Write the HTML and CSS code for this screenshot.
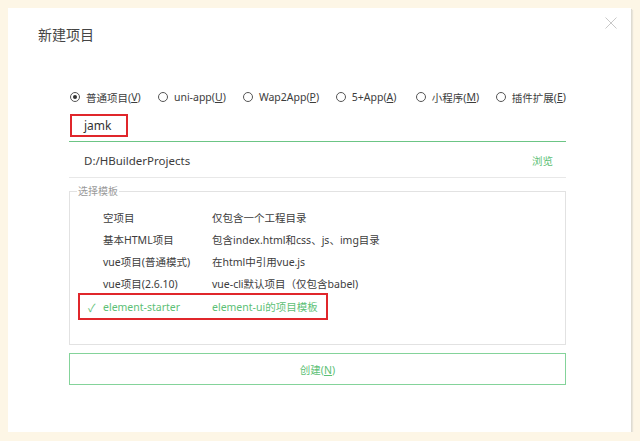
FILE: index.html
```html
<!DOCTYPE html>
<html lang="zh-CN">
<head>
    <meta charset="UTF-8">
    <title>新建项目</title>
    <link rel="stylesheet" href="styles.css">
</head>
<body>
    <div class="dialog">
        <div class="dialog-head">
            <h1 class="dialog-title">新建项目</h1>
            <svg class="close" width="12" height="12" viewBox="0 0 12 12">
                <path d="M0.5 0.5L11.5 11.5M11.5 0.5L0.5 11.5" stroke="#c8c8c8" stroke-width="1" fill="none"/>
            </svg>
        </div>

        <div class="dialog-body">
            <div class="types">
                <label class="type"><span class="radio checked"></span>普通项目(<u>V</u>)</label>
                <label class="type"><span class="radio"></span>uni-app(<u>U</u>)</label>
                <label class="type"><span class="radio"></span>Wap2App(<u>P</u>)</label>
                <label class="type"><span class="radio"></span>5+App(<u>A</u>)</label>
                <label class="type"><span class="radio"></span>小程序(<u>M</u>)</label>
                <label class="type"><span class="radio"></span>插件扩展(<u>E</u>)</label>
            </div>

            <div class="name-field">
                <span class="name-value">jamk</span>
            </div>

            <div class="path-field">
                <span class="path-value">D:/HBuilderProjects</span>
                <span class="browse">浏览</span>
            </div>

            <fieldset class="templates">
                <legend>选择模板</legend>
                <div class="tpl-row">
                    <span class="check"></span>
                    <span class="tpl-name">空项目</span>
                    <span class="tpl-desc">仅包含一个工程目录</span>
                </div>
                <div class="tpl-row">
                    <span class="check"></span>
                    <span class="tpl-name">基本HTML项目</span>
                    <span class="tpl-desc">包含index.html和css、js、img目录</span>
                </div>
                <div class="tpl-row">
                    <span class="check"></span>
                    <span class="tpl-name">vue项目(普通模式)</span>
                    <span class="tpl-desc">在html中引用vue.js</span>
                </div>
                <div class="tpl-row">
                    <span class="check"></span>
                    <span class="tpl-name">vue项目(2.6.10)</span>
                    <span class="tpl-desc">vue-cli默认项目（仅包含babel)</span>
                </div>
                <div class="tpl-row selected">
                    <span class="check">✓</span>
                    <span class="tpl-name">element-starter</span>
                    <span class="tpl-desc">element-ui的项目模板</span>
                </div>
            </fieldset>

            <button class="create">创建(<u>N</u>)</button>
        </div>
    </div>
</body>
</html>
```

FILE: styles.css
```css
html {
    font-family: "Noto Sans", "Noto Sans CJK SC", sans-serif;
}

body {
    margin: 0;
    background-color: #fdf6e6;
    color: #3c3c3c;
}

.dialog {
    box-sizing: border-box;
    width: 623px;
    height: 424px;
    margin: 8px 0 0 8px;
    background-color: #fff;
    box-shadow: 1px 1px 0 #dedbd2, 2px 2px 1px #e9e5da;
}

.dialog-head {
    display: flex;
    justify-content: space-between;
    align-items: flex-start;
    padding: 0 14px 0 30px;
}

.dialog-title {
    margin: 17px 0 0 0;
    font-size: 14px;
    font-weight: normal;
    line-height: 20px;
    color: #444;
}

.close {
    margin-top: 9px;
}

.dialog-body {
    padding: 0 65px 0 61px;
}

/* project type radios */
.types {
    display: flex;
    margin-top: 43px;
    height: 18px;
    align-items: center;
    font-size: 10.5px;
    white-space: nowrap;
}

.type {
    display: flex;
    align-items: center;
    color: #3c3c3c;
}

.type:nth-child(1) { width: 89px; }
.type:nth-child(2) { width: 86px; }
.type:nth-child(3) { width: 94px; }
.type:nth-child(4) { width: 81px; }
.type:nth-child(5) { width: 81px; }

.type u,
.create u {
    text-underline-offset: 1px;
}

.radio {
    box-sizing: border-box;
    flex: none;
    width: 10px;
    height: 10px;
    margin: 0 6px 0 1px;
    border: 1px solid #555;
    border-radius: 50%;
    display: flex;
    align-items: center;
    justify-content: center;
}

.radio.checked::after {
    content: "";
    width: 4px;
    height: 4px;
    border-radius: 50%;
    background-color: #333;
}

/* name + path */
.name-field {
    margin-top: 7px;
    padding: 0 0 4px 1px;
    border-bottom: 1px solid #6cc585;
}

.name-value {
    box-sizing: border-box;
    display: inline-block;
    width: 58px;
    height: 23px;
    padding-left: 12px;
    border: 2px solid #e0262b;
    font-size: 12px;
    line-height: 19px;
    color: #333;
}

.path-field {
    display: flex;
    justify-content: space-between;
    align-items: center;
    padding: 10px 13px 7px 15px;
    border-bottom: 1px solid #e8e8e8;
    line-height: 18px;
}

.path-value {
    font-size: 11.5px;
    color: #3c3c3c;
}

.browse {
    font-size: 10.5px;
    color: #5dbf76;
}

/* template list */
.templates {
    margin: 6px 0 0 0;
    padding: 8px 0 0 10px;
    height: 161px;
    box-sizing: border-box;
    border: 1px solid #e2e2e2;
}

.templates legend {
    margin-left: -3px;
    padding: 0 1px;
    font-size: 10px;
    line-height: 14px;
    color: #9a9a9a;
}

.tpl-row {
    display: flex;
    align-items: center;
    height: 22px;
    font-size: 10.5px;
    color: #3c3c3c;
}

.check {
    width: 15px;
    padding-left: 8px;
    color: #5dbf76;
    font-size: 11px;
}

.tpl-name {
    width: 109px;
}

.tpl-row.selected {
    width: 246px;
    height: 23px;
    margin-top: 1px;
    outline: 2px solid #e0262b;
    color: #5dbf76;
}

/* create button */
.create {
    display: block;
    box-sizing: border-box;
    width: 100%;
    height: 32px;
    margin-top: 8px;
    border: 1px solid #84d39a;
    background-color: #fff;
    font-family: inherit;
    font-size: 10.5px;
    color: #5dbf76;
}
```
